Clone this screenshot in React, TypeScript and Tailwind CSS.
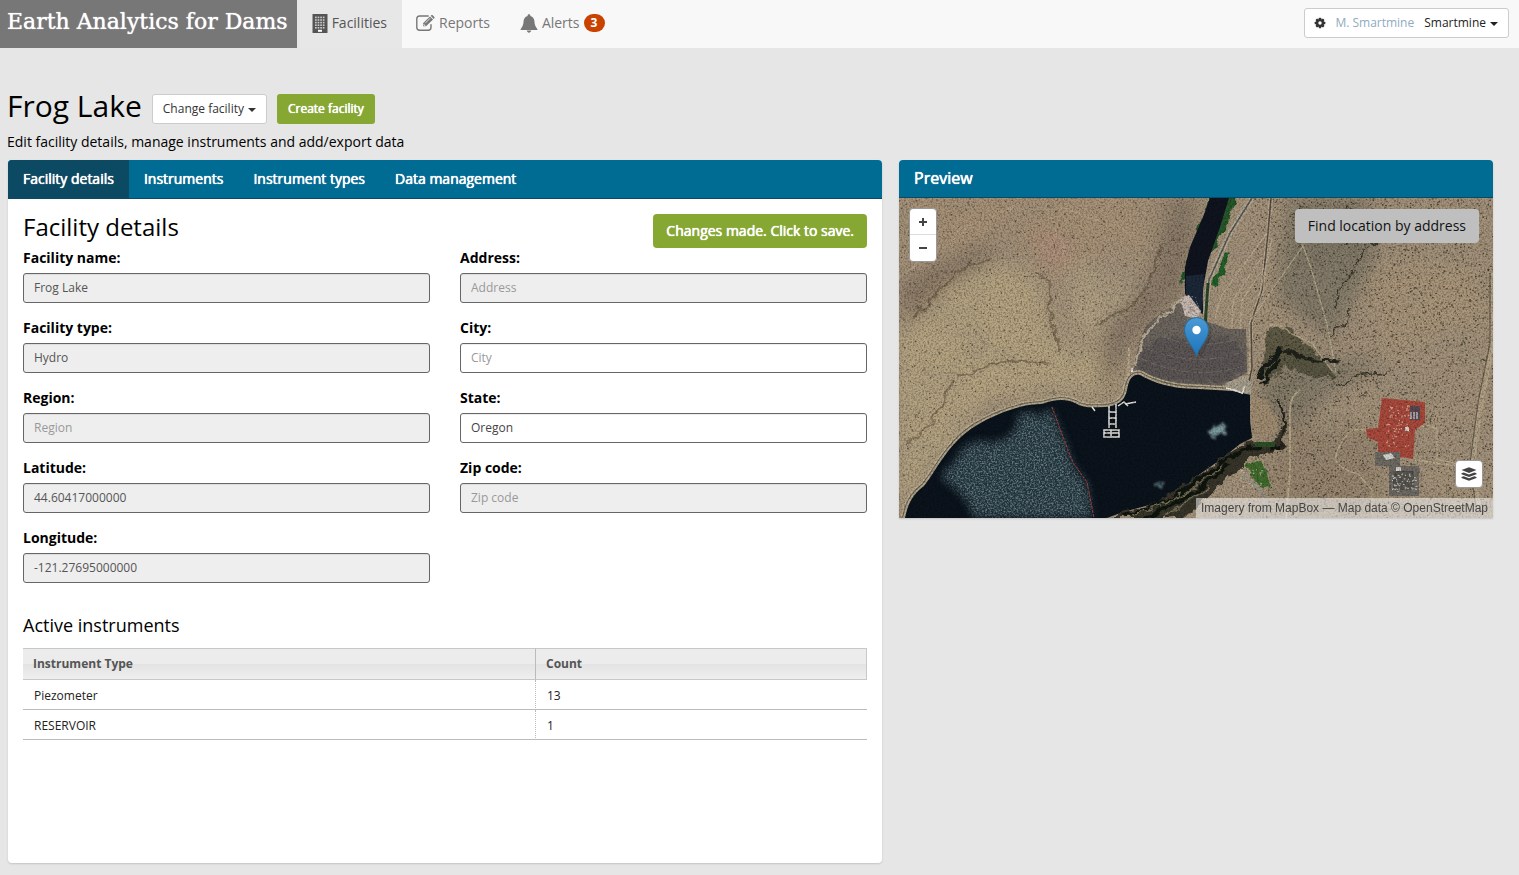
import React from "react";

const tabs = ["Facility details", "Instruments", "Instrument types", "Data management"];

type FieldSpec = {
  id: string;
  label: string;
  value?: string;
  placeholder?: string;
  locked?: boolean;
};

const leftFields: FieldSpec[] = [
  { id: "name", label: "Facility name:", value: "Frog Lake", locked: true },
  { id: "type", label: "Facility type:", value: "Hydro", locked: true },
  { id: "region", label: "Region:", placeholder: "Region", locked: true },
  { id: "latitude", label: "Latitude:", value: "44.60417000000", locked: true },
  { id: "longitude", label: "Longitude:", value: "-121.27695000000", locked: true },
];

const rightFields: FieldSpec[] = [
  { id: "address", label: "Address:", placeholder: "Address", locked: true },
  { id: "city", label: "City:", placeholder: "City" },
  { id: "state", label: "State:", value: "Oregon" },
  { id: "zip", label: "Zip code:", placeholder: "Zip code", locked: true },
];

const instruments = [
  { type: "Piezometer", count: 13 },
  { type: "RESERVOIR", count: 1 },
];

function Caret() {
  return (
    <svg width="8" height="4" viewBox="0 0 8 4" className="mt-0.5 shrink-0" aria-hidden="true">
      <path d="M0 0h8L4 4z" fill="currentColor" />
    </svg>
  );
}

function BuildingIcon() {
  const windows: React.ReactNode[] = [];
  for (let r = 0; r < 5; r++)
    for (let c = 0; c < 4; c++)
      windows.push(<rect key={`${r}-${c}`} x={3 + c * 2.6} y={2.6 + r * 2.6} width="1.7" height="1.6" fill="#c9c9c9" />);
  return (
    <svg width="16" height="19" viewBox="0 0 16 19" aria-hidden="true">
      <path d="M0.5 0h15v19h-15z" fill="#555" />
      {windows}
      <rect x="6" y="15.8" width="4" height="2" fill="#fff" />
    </svg>
  );
}

function EditIcon() {
  return (
    <svg width="19" height="16" viewBox="0 0 19 16" fill="none" aria-hidden="true">
      <path d="M12.2 1H3.6A2.9 2.9 0 0 0 .8 3.8v8.6a2.9 2.9 0 0 0 2.8 2.8h8.6a2.9 2.9 0 0 0 2.8-2.8V9.6" stroke="#777" strokeWidth="1.4" strokeLinecap="round" />
      <path d="M7 8.3 14 1.4l3 3-7 6.9H7z" fill="#777" />
      <path d="m14.7.8.6-.5c.4-.4 1-.4 1.4 0l1.6 1.6c.4.4.4 1 0 1.4l-.6.6z" fill="#777" />
      <path d="m9.3 8.1 4.9-4.9M7.9 8.8v1.6h1.5" stroke="#f8f8f8" strokeWidth=".8" />
    </svg>
  );
}

function BellIcon() {
  return (
    <svg width="18" height="19" viewBox="0 0 18 19" fill="#777" aria-hidden="true">
      <path d="M9 .3c.9 0 1.5.7 1.4 1.6C13 2.6 14.200 4.600 14.400 7c.2 3.400.8 5.300 2.200 6.900.6.600.9 1.100.9 2H.5c0-.9.3-1.400.9-2C2.800 12.300 3.400 10.400 3.600 7 3.800 4.600 5 2.600 7.600 1.900 7.500 1 8.100.3 9 .3z" />
      <path d="M6.800 16.500h4.400c-.3 1.400-1.100 2.200-2.200 2.200s-1.900-.8-2.200-2.200z" />
    </svg>
  );
}

function CogIcon() {
  return (
    <svg width="12" height="12" viewBox="0 0 12 12" aria-hidden="true">
      <g fill="#333">
        {[0, 45, 90, 135].map((a) => (
          <rect key={a} x="4.800" y="0.700" width="2.400" height="10.600" rx=".5" transform={`rotate(${a} 6 6)`} />
        ))}
        <circle cx="6" cy="6" r="4.100" />
      </g>
      <circle cx="6" cy="6" r="1.700" fill="#fff" />
    </svg>
  );
}

function LayersIcon() {
  return (
    <svg width="16" height="14" viewBox="0 0 16 14" fill="#444" aria-hidden="true">
      <path d="M8 0.300 15.500 3 8 5.900.5 3z" />
      <path d="M.5 6.300 2.700 5.500 8 7.500l5.300-2 2.200.8v1L8 10.100.5 7.300z" />
      <path d="M.5 10 2.700 9.200 8 11.200l5.300-2 2.200.8v1L8 13.800.5 11z" />
    </svg>
  );
}

function makeRandom(seed: number) {
  let s = seed;
  return () => {
    s = (s * 1664525 + 1013904223) % 4294967296;
    return s / 4294967296;
  };
}

function scatter(seed: number, count: number, x: number, y: number, w: number, h: number) {
  const rnd = makeRandom(seed);
  let d = "";
  for (let i = 0; i < count; i++) {
    const px = (x + rnd() * w).toFixed(1);
    const py = (y + rnd() * h).toFixed(1);
    const size = rnd() > 0.5 ? "1.500" : "1";
    d += `M${px} ${py}h${size}v1.200h-${size}z`;
  }
  return d;
}

const shrubsWest = scatter(7, 850, 0, 0, 290, 290);
const shrubsEast = scatter(21, 2500, 352, 0, 242, 320);
const equipment = scatter(5, 75, 487, 205, 24, 44);
const substation = scatter(9, 60, 493, 275, 24, 18);
const cottages = scatter(33, 26, 338, 268, 26, 22);
const rubble = scatter(41, 45, 280, 98, 20, 24);

const shoreline =
  "M6 320C9 305 14 296 25 288 36 274 42 260 57 244 70 230 84 223 100 216 115 210 128 206 143 206 155 202 165 200 176 205 186 211 195 209 206 209 218 208 226 203 228 192 230 180 234 176 241 177 258 187 278 191 300 191L334 193 351 196";
const lake = `${shoreline} 351 222 353 240 341 246 321 262 301 276 284 290 258 305 224 314 208 320z`;
const glint = "M118 217q12-6 24 2l9-10 17 40q4 20 20 36l6 35H75q-5-22-34-41l17-18q4-14 21-18 24 4 32-6 10-8 7-20z";

function AerialMap() {
  return (
    <svg className="block h-full w-full" viewBox="0 0 594 320" preserveAspectRatio="xMidYMid slice" role="img" aria-label="Aerial view of Frog Lake dam">
      <defs>
        <filter id="grain" x="0" y="0" width="100%" height="100%">
          <feTurbulence type="fractalNoise" baseFrequency="0.55" numOctaves="3" seed="4" />
          <feColorMatrix values="0 0 0 0 0  0 0 0 0 0  0 0 0 0 0  1.800 0.800 0 0 -1.100" />
        </filter>
        <filter id="patches" x="0" y="0" width="100%" height="100%">
          <feTurbulence type="fractalNoise" baseFrequency="0.022 0.03" numOctaves="5" seed="12" />
          <feColorMatrix values="0 0 0 0 0.300  0 0 0 0 0.260  0 0 0 0 0.200  2.600 0 0 0 -1.050" />
        </filter>
        <filter id="sparkle" x="0" y="0" width="100%" height="100%">
          <feTurbulence type="fractalNoise" baseFrequency="0.6" numOctaves="3" seed="8" />
          <feColorMatrix values="0 0 0 0 0.500  0 0 0 0 0.620  0 0 0 0 0.620  3 0 0 0 -1.200" result="n" />
          <feGaussianBlur in="SourceAlpha" stdDeviation="4" result="s" />
          <feComposite in="n" in2="s" operator="in" />
        </filter>
        <filter id="rough" x="-10%" y="-10%" width="120%" height="120%">
          <feTurbulence type="fractalNoise" baseFrequency="0.09" numOctaves="3" seed="2" result="t" />
          <feDisplacementMap in="SourceGraphic" in2="t" scale="11" xChannelSelector="R" yChannelSelector="G" />
        </filter>
        <filter id="soft" x="-20%" y="-20%" width="140%" height="140%">
          <feGaussianBlur stdDeviation="9" />
        </filter>
        <filter id="edge" x="-20%" y="-20%" width="140%" height="140%">
          <feGaussianBlur stdDeviation="5" />
        </filter>
        <filter id="wisp" x="-30%" y="-30%" width="160%" height="160%">
          <feTurbulence type="fractalNoise" baseFrequency="0.15" numOctaves="3" seed="6" result="t" />
          <feDisplacementMap in="SourceGraphic" in2="t" scale="14" xChannelSelector="R" yChannelSelector="G" />
          <feGaussianBlur stdDeviation="0.900" />
        </filter>
        <linearGradient id="pin" x1="0" y1="0" x2="0" y2="1">
          <stop offset="0" stopColor="#4a9ad4" />
          <stop offset="1" stopColor="#1c74bd" />
        </linearGradient>
        <clipPath id="lakeClip">
          <path d={lake} />
        </clipPath>
      </defs>

      <rect width="594" height="320" fill="#a5937b" />
      <g filter="url(#soft)">
        <path d="M0 130 60 80 100 65 140 80 155 140 220 160 215 195 150 195 90 200 0 310z" fill="#b6a482" />
        <path d="M170 60 230 90 240 120 220 160 175 130z" fill="#b3a284" />
        <path d="M0 0h270l-20 50-90 10-70-20-80 30z" fill="#a99378" />
        <path d="M135 35 165 30 175 70 145 75z" fill="#ad8f79" />
        <path d="M0 85 85 45 100 55 40 95 10 130z" fill="#8b7966" />
        <path d="M268 0 300 0 290 90 232 145 200 200 205 130 250 80z" fill="#8a7a67" />
        <path d="M391 0 471 0 478 55 458 92 434 142 378 100 385 40z" fill="#827967" />
        <path d="M360 180 390 150 434 160 488 165 430 195 400 230 370 250z" fill="#857b69" />
        <path d="M480 70h100v50l-100 30z" fill="#aa967a" />
        <path d="M370 230h110v90h-110z" fill="#998770" />
      </g>
      <rect width="594" height="320" filter="url(#patches)" opacity=".22" />

      <g filter="url(#rough)" fill="none" strokeLinejoin="round">
        <path d="M14 119 41 92 58 74 91 60M140 75l10 12v24l13 45M60 178l42-14q20-6 48 2M8 245q35-22 44-62M200 125l35-20 14-16 14-44" stroke="#594b3a" strokeWidth="2.500" opacity=".5" />
        <path d="M0 80 60 35 92 18 120 8M143 0l20 45 8 45M160 8l70 25 28 20" stroke="#bfae93" strokeWidth="1.200" opacity=".5" />
        <path d="M455 75 440 90 437 108M470 45 455 70M446 5l20 20-18 20M452 110l-10 18-12 10M400 8l12 12M410 40l20-12 20 5" stroke="#3d3a2e" strokeWidth="1.200" />
        <path d="M366 142l4-12q10-8 24 4 24 20 44 46l-30-2-22-10-22 20z" fill="#4a4936" opacity=".75" />
        <path d="M438 190l18-12 30-3M448 10l10 22 20 15" stroke="#3d3a2e" strokeWidth="1.500" />
      </g>
      <path d={shrubsWest} fill="#3b3225" opacity=".65" />
      <path d={shrubsEast} fill="#2b281b" opacity=".68" />

      <path d="M310 0 336 0 328 30 317 50 303 60 290 85 281 82 292 50z" fill="#27592c" filter="url(#rough)" />
      <path d="M311 0 330 0 321 29 309 63 303 96 305 118 286 96 286 69 291 49 304 19z" fill="#10141f" />
      <path d="M287 78l18-2-2 40-16-20z" fill="#1c2839" />
      <path d="M329 55 321 75 312 88" stroke="#24602a" strokeWidth="6" fill="none" filter="url(#rough)" />
      <g fill="none">
        <path d="M353 0 331 35 310 82 306 118" stroke="#b3aa95" strokeWidth="5" />
        <path d="M353 0 331 35 310 82 306 118" stroke="#5c564e" strokeWidth="1.500" />
        <path d="M309 85 306 130" stroke="#2a4526" strokeWidth="3" />
        <path d="M372 0 369 35 363 92 352 125 352 170 348 192" stroke="#b5a68b" strokeWidth="4" />
        <path d="M372 0 369 35 363 92 352 125 353 170 348 192" stroke="#574c44" strokeWidth="1.500" />
        <g stroke="#c2b394" strokeWidth="1.300" opacity=".7">
          <path d="M368 35 322 98 316 120M366 55 334 102 332 148M365 70 343 102 340 145M373 40 360 100M403 45 412 70 429 130 437 175M406 45 350 125M371 127q12-2 20 8l22 10 20 28" />
          <path d="M391 212v60l-4 48M391 212q0-14 10-20" strokeWidth="2" />
          <path d="M526 226l12 5v30l38 9M516 262l62 9M483 228l18-5 25 6M479 240q-20-15-30-4t-12 22 22 18l14 16v30M515 290v20l60-5" />
          <path d="M594 75v70l-12 60-8 60 6 45" strokeWidth="5" opacity=".7" />
        </g>
        <path d="M591 75v70l-12 60-8 60 6 45" stroke="#6d604f" strokeWidth="1.200" />
        <path d="M229 190 230 150" stroke="#b8aa8d" strokeWidth="2" />
      </g>

      <path d="M234 196C236 180 240 160 247 147 258 136 268 130 280 124L300 140 330 150 347 150 348 194 320 208 280 206z" fill="#6d665f" transform="translate(0 -19)" />
      <path d="M237 172 242 150 262 140 330 138 348 155 345 174 322 184 284 184 258 180z" fill="#5b5654" filter="url(#wisp)" />
      <g fill="none" stroke="#857e78" strokeWidth="1" opacity=".5" strokeDasharray="9 2">
        <path d="M246 150q48 20 98 4M241 160q50 24 104 8M262 138q35 14 74 4" />
      </g>
      <path d="M236 168 243 140Q252 124 285 102" stroke="#b5a991" strokeWidth="3" fill="none" filter="url(#rough)" />

      <path d={shoreline} fill="none" stroke="#bcae92" strokeWidth="9" strokeLinejoin="round" />
      <path d={shoreline} fill="none" stroke="#6a6151" strokeWidth="6" />
      <path d={shoreline} fill="none" stroke="#b3a78d" strokeWidth="4" />
      <path d={lake} fill="#0b131c" />
      <path d="M326 185 346 178 353 186 352 197 334 193z" fill="#a89f8d" />
      <g clipPath="url(#lakeClip)">
        <path d={glint} fill="#2c4149" filter="url(#edge)" opacity=".85" />
        <path d={glint} filter="url(#sparkle)" opacity=".45" />
        <path d="M308 232 315 228 327 227 326 235 312 240z" fill="#7d9a9c" filter="url(#wisp)" />
        <path d="M257 286l6-2 3 3-5 3z" fill="#617e82" filter="url(#wisp)" />
        <path d="M153 209 164 239 174 265 188 284 195 320" fill="none" stroke="#a34444" strokeDasharray="3 1" />
      </g>

      <path d="M208 320 258 305 301 276 341 246 352 244 372 248 387 225 386 248 354 260 324 284 295 312 280 320z" fill="#37362a" filter="url(#rough)" />
      <g filter="url(#rough)" fill="none">
        <path d="M225 320 275 300 318 268 345 250 383 248M245 320 295 295 330 266" stroke="#11140f" strokeWidth="4" />
        <path d="M235 317 286 296 323 267M265 318 310 289" stroke="#77715a" strokeWidth="1.500" />
        <path d="M384 250q4-26-4-48" stroke="#25231a" strokeWidth="2" />
        <path d="M358 182 366 168 384 150M362 188 380 162" stroke="#191a15" strokeWidth="5" />
        <path d="M386 154l35 8 20 2" stroke="#23231b" strokeWidth="3" />
      </g>
      <path d="M353 198 366 205 378 217 380 232 366 241 354 238z" fill="#a08c71" filter="url(#rough)" />
      <path d="M354 244h22v5h-18z" fill="#2e4f26" />
      <path d="M344 270 360 262 368 275 372 290 362 288z" fill="#436c2d" filter="url(#rough)" />
      <path d={cottages} fill="#d9d6c5" opacity=".7" />
      <path d="M343 278q16 8 22 22l3 16" fill="none" stroke="#9b9586" strokeWidth="3" />

      <path d="M483 200 526 204 526 225 516 232 514 261 479 255 479 244 468 239 467 231 479 230z" fill="#aa4a3d" />
      <path d="M476 254h25v14h-25zM490 268h30v30h-30z" fill="#6f6b64" />
      <path d="M494 273h21v19h-21z" fill="#57544f" />
      <path d="M511 208h10v14h-10z" fill="#5a4a52" />
      <path d={equipment} fill="#ddb1a1" opacity=".85" />
      <path d={substation} fill="#d4d4ce" opacity=".85" />
      <path d="M484 257l8-2 4 5-9 2zM497 269h5v4h-5zM506 229h4v4h-4z" fill="#d5d3ce" />
      <path d="M512 214v7m3-7v7m3-7v7" stroke="#eee" />

      <g stroke="#e8e5e0" fill="none" strokeWidth="1.500">
        <path d="M210 208v22M217 206v24M210 214h7m-7 6h7m-7 6h7M205 232h15v7h-15zM205 235h15M212 232v7" />
        <path d="M219 208l6-4 4 4M226 206l11-2M193 209l3 4M327 190l8 2 8 3M346 188l-3 8" />
        <path d="M233 170v4" strokeWidth="2" />
      </g>
      <path d="M281 100 290 97 296 105 302 113 298 121 286 118z" fill="#cbbdb5" />
      <path d={rubble} fill="#8d807b" opacity=".8" />

      <rect width="594" height="320" filter="url(#grain)" opacity=".36" />

      <path d="M297.500 158 287.500 138.500C284 130 288 120.500 297.500 120.500S311 130 307.500 138.500z" fill="#000" opacity=".12" transform="translate(4 2)" />
      <path d="M297.500 158C295 149 285.500 142 285.500 131.500a12 12 0 0 1 24 0c0 10.500-9.500 17.500-12 26.500z" fill="url(#pin)" stroke="#2e6c97" />
      <circle cx="297.500" cy="132" r="4.200" fill="#fff" />
    </svg>
  );
}

function Field({ field }: { field: FieldSpec }) {
  return (
    <div className="mb-[15px]">
      <label htmlFor={field.id} className="mb-[5px] block text-sm leading-5 font-bold">
        {field.label}
      </label>
      <input
        id={field.id}
        type="text"
        defaultValue={field.value}
        placeholder={field.placeholder}
        disabled={field.locked}
        className="block h-[30px] w-full rounded-[3px] border border-[#666] bg-white px-2.5 pb-0.5 text-xs text-[#444] shadow-[inset_0_1px_1px_rgba(0,0,0,0.075)] placeholder:text-[#999] disabled:bg-[#eee] disabled:text-[#555]"
      />
    </div>
  );
}

export default function App() {
  return (
    <div className="min-h-screen bg-[#e6e6e6] pb-3 font-['Open_Sans',sans-serif] text-sm leading-5 text-black">
      <header className="flex h-12 items-center justify-between bg-[#f8f8f8] pr-[10px]">
        <div className="flex h-full">
          <a href="#home" className="flex h-full items-center bg-[#777] pr-[9px] pb-1 pl-[7px] font-['DejaVu_Serif',serif] text-[22px] whitespace-nowrap text-white [text-shadow:0_0_1px_#fff]">
            Earth Analytics for Dams
          </a>
          <nav className="flex h-full text-[#777]">
            <a href="#facilities" className="flex h-full items-center gap-1 bg-[#e7e7e7] px-[15px] pb-0.5 text-[#555]">
              <BuildingIcon />
              Facilities
            </a>
            <a href="#reports" className="flex h-full items-center gap-1 px-[14px] pb-0.5">
              <EditIcon />
              Reports
            </a>
            <a href="#alerts" className="flex h-full items-center gap-1 px-4 pb-0.5">
              <BellIcon />
              Alerts
              <span className="flex h-[18px] min-w-[21px] items-center justify-center rounded-full bg-[#c94200] text-xs font-bold text-white">3</span>
            </a>
          </nav>
        </div>
        <button type="button" className="mb-0.5 flex h-[30px] items-center rounded-[3px] border border-[#ccc] bg-white pr-[10px] pl-[9px] text-xs text-[#222]">
          <CogIcon />
          <span className="ml-[9px] text-[#8fabc0]">M. Smartmine</span>
          <span className="mr-1 ml-[10px]">Smartmine</span>
          <Caret />
        </button>
      </header>

      <main className="pt-[38px] pr-[26px] pl-2">
        <div className="flex h-10 items-center">
          <h1 className="-ml-px pr-[10px] text-[30px] leading-10">Frog Lake</h1>
          <button type="button" className="mt-1.5 mr-[10px] flex h-[30px] items-center gap-1 rounded-[3px] border border-[#ccc] bg-white px-[10px] text-xs text-[#333]">
            Change facility
            <Caret />
          </button>
          <button type="button" className="mt-1.5 h-[30px] rounded-[3px] bg-[#86a833] px-[11px] text-xs text-white [text-shadow:0_0_0_#fff,0_0_1px_#fff]">
            Create facility
          </button>
        </div>
        <p className="-ml-px pt-1.5 pb-2">Edit facility details, manage instruments and add/export data</p>

        <div className="grid grid-cols-[874fr_594fr] items-start gap-[17px]">
          <section className="overflow-hidden rounded-[4px] bg-white pb-[123px] shadow-[0_1px_2px_rgba(0,0,0,0.15)]">
            <div className="flex h-[39px] border-b border-[#0c4a63] bg-[#006b93]" role="tablist">
              {tabs.map((tab, i) => (
                <button
                  key={tab}
                  type="button"
                  role="tab"
                  aria-selected={i === 0}
                  className="px-[15px] text-sm text-white [text-shadow:0_0_0_#fff,0_0_1px_#fff] aria-selected:bg-[#0c4a63]"
                >
                  {tab}
                </button>
              ))}
            </div>
            <div className="px-[15px] pt-[15px]">
              <div className="flex h-[34px] items-start justify-between">
                <h2 className="text-2xl leading-[26px]">Facility details</h2>
                <button type="button" className="h-[34px] rounded-[4px] bg-[#86a833] px-[13px] text-sm text-white [text-shadow:0_0_0_#fff,0_0_1px_#fff]">
                  Changes made. Click to save.
                </button>
              </div>
              <form className="grid grid-cols-2 gap-x-[30px]">
                <div>
                  {leftFields.map((f) => (
                    <Field key={f.id} field={f} />
                  ))}
                </div>
                <div>
                  {rightFields.map((f) => (
                    <Field key={f.id} field={f} />
                  ))}
                </div>
              </form>
              <h3 className="mt-[17px] mb-[13px] text-lg leading-5">Active instruments</h3>
              <table className="w-full table-fixed border-separate border-spacing-0 text-left text-xs text-[#222]">
                <colgroup>
                  <col className="w-[513px]" />
                  <col className="w-[331px]" />
                </colgroup>
                <thead>
                  <tr className="h-8 text-[#555]">
                    <th className="border-y border-r border-[#c8c8c8] border-r-[#bbb] bg-linear-to-b from-[#ececec] from-50% via-[#e3e3e3] via-50% to-[#efefef] px-[10px] font-bold">Instrument Type</th>
                    <th className="border-y border-r border-[#c8c8c8] bg-linear-to-b from-[#ececec] from-50% via-[#e3e3e3] via-50% to-[#efefef] px-[10px] font-bold">Count</th>
                  </tr>
                </thead>
                <tbody>
                  {instruments.map((row) => (
                    <tr key={row.type} className="h-[30px]">
                      <td className="border-r border-b border-[#bbb] [border-right-style:dotted] px-[11px] pt-0.5">{row.type}</td>
                      <td className="border-b border-[#bbb] px-[11px] pt-0.5">{row.count}</td>
                    </tr>
                  ))}
                </tbody>
              </table>
            </div>
          </section>

          <section className="overflow-hidden rounded-t-[4px] bg-white shadow-[0_1px_2px_rgba(0,0,0,0.15)]">
            <h2 className="flex h-[38px] items-center border-b border-[#0c4a63] bg-[#006b93] px-[15px] pb-0.5 text-base text-white [text-shadow:0_0_0_#fff,0_0_1px_#fff]">Preview</h2>
            <div className="relative h-80">
              <AerialMap />
              <div className="absolute top-[10px] left-[10px] flex w-7 flex-col overflow-hidden rounded-[4px] border border-[#999] bg-white text-[#444]">
                <button type="button" aria-label="Zoom in" className="flex h-[26px] items-center justify-center border-b border-[#ddd]">
                  <svg width="8" height="8" viewBox="0 0 8 8" aria-hidden="true">
                    <path d="M0 4h8M4 0v8" stroke="currentColor" strokeWidth="2" />
                  </svg>
                </button>
                <button type="button" aria-label="Zoom out" className="flex h-[26px] items-center justify-center">
                  <svg width="8" height="8" viewBox="0 0 8 8" aria-hidden="true">
                    <path d="M0 4h8" stroke="currentColor" strokeWidth="2" />
                  </svg>
                </button>
              </div>
              <button type="button" className="absolute top-[11px] right-[14px] h-[34px] rounded-[4px] bg-[#bfbfbf] px-[13px] text-sm text-[#111]">
                Find location by address
              </button>
              <button type="button" aria-label="Layers" className="absolute right-[10px] bottom-[30px] flex size-7 items-center justify-center rounded-[4px] border border-[#999] bg-white">
                <LayersIcon />
              </button>
              <p className="absolute right-0 bottom-0 bg-white/50 px-[5px] font-['Liberation_Sans',sans-serif] text-xs leading-5 text-[#444]">
                Imagery from MapBox — Map data © OpenStreetMap
              </p>
            </div>
          </section>
        </div>
      </main>
    </div>
  );
}
